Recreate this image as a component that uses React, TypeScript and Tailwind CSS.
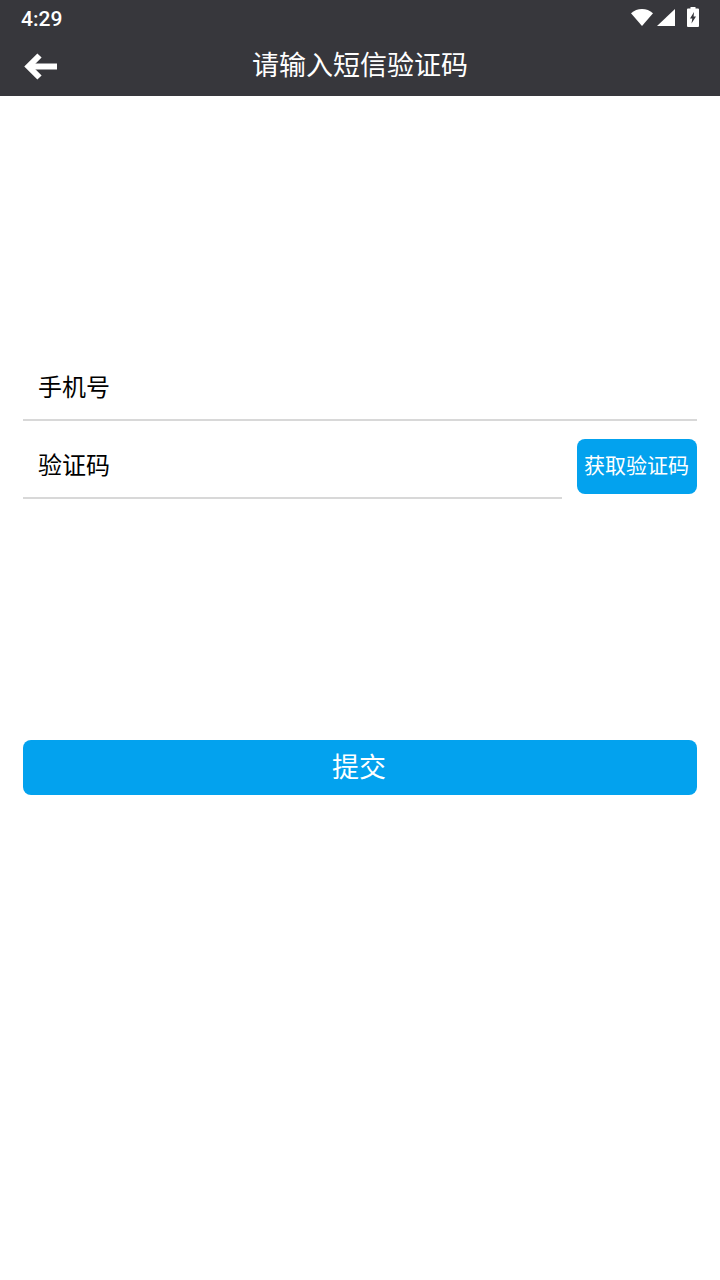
const cjk = "font-['Roboto','Noto_Sans_CJK_SC',sans-serif]"

/* COMPONENT */
export default function App() {
    return (
        <div className={`w-[720px] h-[1280px] bg-white flex flex-col ${cjk}`}>
            {/* STATUS + TITLE BAR */}
            <div className="h-[96px] bg-[#37373c] text-white flex flex-col shrink-0">
                <div className="h-[38px] pl-[21px] pr-[21px] flex items-center justify-between">
                    <span className="text-[21px] font-medium leading-none">4:29</span>
                    <div className="flex items-center mb-[4px]">
                        <svg width="22" height="17" viewBox="0 0 22 17" fill="white">
                            <path d="M0 4.2C3 1.5 7 0 11 0s8 1.5 11 4.2L11 17z" />
                        </svg>
                        <svg className="ml-[4px]" width="18" height="17" viewBox="0 0 18 17" fill="white">
                            <path d="M0 17L18 0V17z" />
                        </svg>
                        <svg className="ml-[12px]" width="12" height="20" viewBox="0 0 12 20" fill="white">
                            <path fillRule="evenodd" d="M3.5 0h5V1.5h2.5a1 1 0 0 1 1 1V19a1 1 0 0 1-1 1H1a1 1 0 0 1-1-1V2.5a1 1 0 0 1 1-1h2.500zM7 5L3 11.500h2.300L4.500 16.500l4.500-7H6.600z" />
                        </svg>
                    </div>
                </div>
                <div className="flex-1 relative flex items-center justify-center">
                    <svg className="absolute left-[24px] top-[15px]" width="34" height="27" viewBox="0 0 34 27" fill="none" stroke="white" strokeWidth="6">
                        <path d="M33 13.500H6" />
                        <path d="M15.500 2.500L4.500 13.500L15.500 24.500" />
                    </svg>
                    <span className="text-[27px] leading-none mb-[2px]">请输入短信验证码</span>
                </div>
            </div>

            {/* FORM */}
            <div className="px-[23px] pt-[246px] flex flex-col">
                <div className="h-[79px] border-b-2 border-[#d8d8d8] flex items-center pl-[15px] pt-[14px] text-[24px] text-black">手机号</div>
                <div className="flex items-start gap-[15px]">
                    <div className="flex-1 h-[78px] border-b-2 border-[#d8d8d8] flex items-center pl-[15px] pt-[14px] text-[24px] text-black">验证码</div>
                    <div className="w-[120px] h-[55px] mt-[18px] pr-[1px] bg-[#03a2ee] rounded-[8px] text-white text-[21px] flex items-center justify-center whitespace-nowrap">获取验证码</div>
                </div>
                <div className="mt-[241px] h-[55px] pr-[2px] pt-[1px] bg-[#03a2ee] rounded-[8px] text-white text-[27px] flex items-center justify-center">提交</div>
            </div>
        </div>
    )
}
